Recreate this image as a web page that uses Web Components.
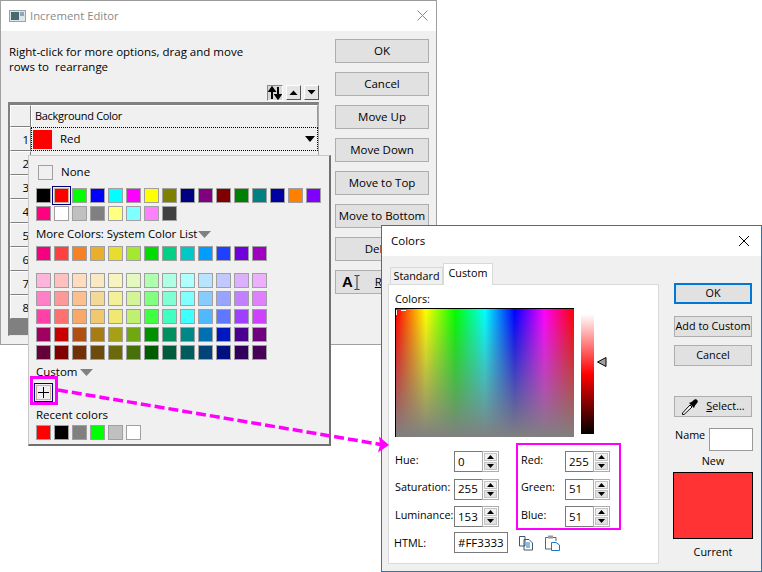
<!DOCTYPE html>
<html>
<head>
<meta charset="utf-8">
<title>Increment Editor</title>
<style>
  html, body { margin: 0; padding: 0; background: #fff; }
  body { width: 762px; height: 572px; overflow: hidden; position: relative; font: 11.5px "Open Sans", "Noto Sans", sans-serif; color: #000; }
</style>
</head>
<body>
<increment-editor></increment-editor>
<color-popup></color-popup>
<colors-dialog></colors-dialog>
<pink-arrow></pink-arrow>

<script>
const FONT = '"Open Sans", "Noto Sans", sans-serif';

class WinButton extends HTMLElement {
  constructor() {
    super();
    this.attachShadow({ mode: 'open' });
    this.shadowRoot.innerHTML = `
      <style>
        :host { display: flex; align-items: center; justify-content: center; box-sizing: border-box; padding-bottom: 2px;
          background: #e1e1e1; border: 1px solid #adadad; font-size: inherit; color: #000; white-space: nowrap; overflow: hidden; }
        :host([primary]) { border: 2px solid #0078d7; }
      </style>
      <slot></slot>`;
  }
}
customElements.define('win-button', WinButton);

class ColorSwatch extends HTMLElement {
  constructor() {
    super();
    this.attachShadow({ mode: 'open' });
    this.shadowRoot.innerHTML = `
      <style>
        :host { display: block; box-sizing: border-box; width: 15px; height: 15px; border: 1px solid #a0a0a0; background: var(--c); }
        :host([selected]) { outline: 1px solid #000080; outline-offset: 1px; border-color: #c8b090; }
      </style>`;
  }
}
customElements.define('color-swatch', ColorSwatch);

class SwatchRow extends HTMLElement {
  constructor() {
    super();
    this.attachShadow({ mode: 'open' });
    this.shadowRoot.innerHTML = `
      <style>:host { display: flex; gap: 3px; flex: none; }</style>`;
  }
  connectedCallback() {
    if (this.shadowRoot.querySelector('color-swatch')) return;
    const sel = this.getAttribute('sel');
    this.getAttribute('colors').split(' ').forEach((c, i) => {
      const s = document.createElement('color-swatch');
      s.style.setProperty('--c', c);
      if (String(i) === sel) s.setAttribute('selected', '');
      this.shadowRoot.appendChild(s);
    });
  }
}
customElements.define('swatch-row', SwatchRow);

class IncrementEditor extends HTMLElement {
  constructor() {
    super();
    this.attachShadow({ mode: 'open' });
    const rows = [2, 3, 4, 5, 6, 7, 8].map(n => `<div class="rh">${n}</div><div class="cell"></div>`).join('');
    this.shadowRoot.innerHTML = `
      <style>
        :host { position: absolute; left: 0; top: 0; width: 437px; height: 345px; box-sizing: border-box;
          display: flex; flex-direction: column; background: #f0f0f0; border: 1px solid #a0a0a0; border-top-color: #9a9a9a; font: 11.5px ${FONT}; }
        .title { height: 30px; flex: none; box-sizing: border-box; background: #fff; display: flex; align-items: center; padding: 0 8px 1px 8px; gap: 4px; color: #8a8a8a; font-size: 11.300px; }
        .title span { flex: 1; }
        .body { flex: 1; display: flex; min-height: 0; }
        .left { width: 334px; flex: none; padding: 13px 0 0 7px; box-sizing: border-box; }
        .hint { line-height: 15px; height: 30px; margin: 0 0 10px 0; padding-left: 1px; }
        .tools { display: flex; justify-content: flex-end; gap: 3px; padding: 1px 16px 0 0; height: 17px; }
        .tools div { width: 15px; height: 15px; box-sizing: border-box; background: #e4e4e4; border: 1px solid #fff; border-right-color: #555; border-bottom-color: #555; display: flex; align-items: center; justify-content: center; }
        .tools div.on { width: 16px; height: 16px; background: #d8d8d8; border: 1px solid #888; border-right-color: #fff; border-bottom-color: #fff; }
        .grid { width: 311px; height: 234px; box-sizing: border-box; border: 2px solid #808080; border-top-width: 3px; border-right: 1px solid #aaa; border-bottom: 1px solid #e8e8e8; background: #808080;
          display: grid; grid-template-columns: 21px 1fr; grid-template-rows: 22px repeat(8, 24px); align-content: start; }
        .rh { background: #f0f0f0; border: 1px solid #fff; border-right-color: #808080; border-bottom-color: #808080; box-sizing: border-box; display: flex; align-items: center; justify-content: flex-end; padding-right: 1px; }
        .cell { background: #f0f0f0; border-bottom: 1px solid #bbb; box-sizing: border-box; }
        .head { display: flex; align-items: center; padding: 0 0 2px 3px; font-size: 11px; letter-spacing: -.3px; border: 1px solid #fff; border-right-color: #999; border-bottom-color: #f0f0f0; box-sizing: border-box; background: #f0f0f0; }
        .sel { border: 1px dotted #000; box-sizing: border-box; display: flex; align-items: center; background: #f0f0f0; padding: 0 2px 0 1px; }
        .sel i { width: 19px; height: 19px; background: #ff0000; margin-right: 8px; flex: none; }
        .sel span { flex: 1; padding-bottom: 2px; }
        .right { flex: 1; display: flex; flex-direction: column; gap: 9px; padding-top: 8px; }
        .right win-button { width: 94px; height: 24px; }
        .ai { justify-content: flex-start; }
        .ai b { font-size: 15px; margin-left: 6px; font-family: "Liberation Sans", sans-serif; }
        .ai svg { margin: 2px 0 0 1px; }
        .ai u { margin-left: 15px; }
      </style>
      <div class="title">
        <svg width="17" height="12" viewBox="0 0 17 12"><rect x="0.5" y="0.5" width="16" height="11" fill="#dfe6e8" stroke="#9aa2a6"/><rect x="2" y="2" width="8" height="8" fill="#4a6a70"/><rect x="11" y="2" width="4" height="4" fill="#8fa8b8"/></svg>
        <span>Increment Editor</span>
        <svg width="11" height="11" viewBox="0 0 11 11"><path d="M0.500 0.500L10.500 10.500M10.500 0.500L0.500 10.500" stroke="#8a8a8a" fill="none"/></svg>
      </div>
      <div class="body">
        <div class="left">
          <div class="hint">Right-click for more options, drag and move<br>rows to&nbsp; rearrange</div>
          <div class="tools">
            <div class="on"><svg width="14" height="14" viewBox="0 0 14 14"><path d="M4 13V4M1.500 5L4 1.500L6.500 5ZM10 1V10M7.500 9L10 12.500L12.500 9Z" stroke="#000" stroke-width="2" fill="#000"/></svg></div>
            <div><svg width="9" height="5" viewBox="0 0 9 5"><path d="M0.500 5L4.500 0.500L8.500 5Z"/></svg></div>
            <div><svg width="9" height="5" viewBox="0 0 9 5"><path d="M0.500 0L4.500 4.500L8.500 0Z"/></svg></div>
          </div>
          <div class="grid">
            <div class="rh"></div><div class="head">Background Color</div>
            <div class="rh">1</div>
            <div class="sel"><i></i><span>Red</span><svg width="10" height="6" viewBox="0 0 10 6"><path d="M0 0H10L5 6Z"/></svg></div>
            ${rows}
          </div>
        </div>
        <div class="right">
          <win-button>OK</win-button>
          <win-button>Cancel</win-button>
          <win-button>Move Up</win-button>
          <win-button>Move Down</win-button>
          <win-button>Move to Top</win-button>
          <win-button>Move to Bottom</win-button>
          <win-button>Delete</win-button>
          <win-button class="ai"><b>A</b><svg width="6" height="15" viewBox="0 0 6 15"><path d="M0.500 0.500H2.500L3 1.500L3.500 0.500H5.500M3 1.500V13.500M0.500 14.500H2.500L3 13.500L3.500 14.500H5.500" stroke="#333" fill="none"/></svg><u>R</u></win-button>
        </div>
      </div>`;
  }
}
customElements.define('increment-editor', IncrementEditor);

class ColorPopup extends HTMLElement {
  constructor() {
    super();
    this.attachShadow({ mode: 'open' });
    const tri = '<svg class="tri" width="13" height="7" viewBox="0 0 13 7"><path d="M0 0H13L6.500 7Z" fill="#808080"/></svg>';
    this.shadowRoot.innerHTML = `
      <style>
        :host { position: absolute; left: 28px; top: 155px; width: 303px; height: 291px; box-sizing: border-box; background: #f0f0f0;
          border: 1px solid #c8c8c8; border-right: 2px solid #707070; border-bottom: 2px solid #707070; padding: 8px 0 0 7px; display: flex; flex-direction: column; font: 11.5px ${FONT}; }
        .none { display: flex; align-items: flex-end; gap: 8px; height: 16px; margin: 0 0 8px 2px; flex: none; }
        .none i { width: 15px; height: 15px; box-sizing: border-box; border: 1px solid #a0a0a0; display: block; }
        .none span { line-height: 16px; }
        .stack { display: flex; flex-direction: column; gap: 3px; flex: none; }
        .lab { height: 20px; display: flex; align-items: center; flex: none; white-space: nowrap; }
        .lab svg { margin: 3px 0 0 1px; }
        .lab.cu svg { margin-left: 3px; }
        .sys { letter-spacing: -.07px; }
        .gap { height: 12px; flex: none; }
        .plus { width: 19px; height: 19px; flex: none; box-sizing: border-box; border: 1px solid #000080; padding: 1px; margin: 2px 0 3px -2px; }
        .plus div { width: 100%; height: 100%; box-sizing: border-box; border: 1px solid #c8b090; }
        .plus svg { display: block; }
        .mag { position: absolute; left: 1px; top: 220px; width: 28px; height: 29px; box-sizing: border-box; border: 3px solid #ff00ff; }
      </style>
      <div class="none"><i></i><span>None</span></div>
      <div class="stack">
        <swatch-row sel="1" colors="#000 #f00 #0f0 #00f #0ff #f0f #ff0 #808000 #000080 #800080 #800000 #008000 #008080 #0000a0 #ff8000 #8000ff"></swatch-row>
        <swatch-row colors="#ff0080 #fff #c0c0c0 #808080 #ffff80 #80ffff #ff80ff #404040"></swatch-row>
      </div>
      <div class="lab sys" style="margin-top:2px;margin-bottom:3px">More Colors: System Color List${tri}</div>
      <swatch-row colors="#f40080 #ff4040 #f58025 #e8ae2c #e8dc2e #a4e832 #00dc00 #00d084 #00c8c8 #009cff #2040ff #7000dc #a000c0"></swatch-row>
      <div class="gap"></div>
      <div class="stack">
        <swatch-row colors="#ffb4dc #ffc0c0 #fddcc0 #f8e8c4 #f8f4c0 #e4f8c0 #b0ffb0 #b0ffe4 #b0ffff #b8e4ff #c0c8ff #dcb0ff #ecb0ff"></swatch-row>
        <swatch-row colors="#ff80c8 #ff9898 #fcc090 #f4d898 #f4f098 #d4f498 #80ff80 #80ffd4 #80ffff #88ccff #98a4ff #c080ff #e080ff"></swatch-row>
        <swatch-row colors="#ff40a8 #ff7070 #f8a868 #f0c870 #f0e870 #c0f070 #40ff40 #40ffc0 #40ffff #50b8ff #6078ff #a040ff #d040ff"></swatch-row>
        <swatch-row colors="#a00060 #c80000 #b05010 #a87c14 #a8a014 #70a814 #009000 #009060 #008888 #0070b0 #0018c0 #4c0090 #700080"></swatch-row>
        <swatch-row colors="#640038 #800000 #703008 #6c4c0c #6c680c #487008 #005c00 #005c3c #005c5c #004478 #001080 #30005c #480058"></swatch-row>
      </div>
      <div class="lab cu" style="margin-top:1px">Custom${tri}</div>
      <div class="plus"><div><svg width="13" height="13" viewBox="0 0 13 13"><path d="M6.500 1V12M1 6.500H12" stroke="#000" fill="none"/></svg></div></div>
      <div class="lab" style="height:18px">Recent colors</div>
      <swatch-row style="margin-top:2px" colors="#f00 #000 #808080 #0f0 #c0c0c0 #fff"></swatch-row>
      <div class="mag"></div>`;
  }
}
customElements.define('color-popup', ColorPopup);

class SpinField extends HTMLElement {
  constructor() {
    super();
    this.attachShadow({ mode: 'open' });
    this.shadowRoot.innerHTML = `
      <style>
        :host { display: flex; box-sizing: border-box; width: 45px; height: 21px; font-size: 11.500px; }
        .val { width: 28px; box-sizing: border-box; background: #fff; border: 1px solid #7a7a7a; border-right: none; padding: 0 0 1px 3px; display: flex; align-items: center; }
        .btns { flex: 1; display: flex; flex-direction: column; gap: 1px; border: 1px solid #adadad; box-sizing: border-box; padding: 1px; background: #fff; }
        .btns div { flex: 1; background: #e1e1e1; border: 1px solid #c4c4c4; display: flex; align-items: center; justify-content: center; }
        .btns div:first-child { background: #f0f0f0; }
      </style>
      <div class="val"><slot></slot></div>
      <div class="btns">
        <div><svg width="7" height="4" viewBox="0 0 7 4"><path d="M0 4L3.500 0L7 4Z"/></svg></div>
        <div><svg width="7" height="4" viewBox="0 0 7 4"><path d="M0 0L3.500 4L7 0Z"/></svg></div>
      </div>`;
  }
}
customElements.define('spin-field', SpinField);

class ColorsDialog extends HTMLElement {
  constructor() {
    super();
    this.attachShadow({ mode: 'open' });
    this.shadowRoot.innerHTML = `
      <style>
        :host { position: absolute; left: 381px; top: 225px; width: 381px; height: 347px; box-sizing: border-box; background: #f0f0f0;
          border: 1px solid #1979ca; display: flex; flex-direction: column; font: 10.800px ${FONT}; }
        .title { height: 30px; flex: none; box-sizing: border-box; background: #fff; display: flex; align-items: center; justify-content: space-between; padding: 0 11px 0 9px; font-size: 11.500px; }
        .title span { padding-bottom: 2px; }
        .body { flex: 1; display: flex; padding: 7px 0 0 6px; min-height: 0; }
        .left { width: 271px; flex: none; display: flex; flex-direction: column; }
        .tabs { display: flex; height: 21px; align-items: flex-end; padding-left: 2px; flex: none; }
        .tab { width: 53px; height: 17px; box-sizing: border-box; border: 1px solid #d9d9d9; border-bottom: none; padding-bottom: 2px; display: flex; align-items: center; justify-content: center; background: #f0f0f0; }
        .tab.on { width: 50px; height: 22px; background: #fff; margin-bottom: -1px; position: relative; z-index: 1; padding-bottom: 4px; }
        .panel { height: 280px; flex: none; box-sizing: border-box; background: #fff; border: 1px solid #d9d9d9; padding: 7px 6px 0 6px; }
        .cap { height: 16px; line-height: 14px; }
        .pick { display: flex; height: 129px; }
        .canvas { width: 179px; height: 129px; box-sizing: border-box; border: 1px solid #000; border-right: none; border-bottom: none; flex: none; position: relative;
          background: linear-gradient(to bottom, rgba(128,128,128,0), #808080), linear-gradient(to right, #f00, #ff0 16.66%, #0f0 33.33%, #0ff 50%, #00f 66.66%, #f0f 83.33%, #f00); }
        .canvas i { position: absolute; background: #fff; }
        .lum { width: 13px; height: 120px; margin: 6px 0 0 7px; flex: none; background: linear-gradient(to bottom, #fff, #f00 50%, #000); }
        .mark { margin: 49px 0 0 3px; flex: none; }
        .fields { display: grid; grid-template-columns: 59px 45px 22px 44px 45px; grid-auto-rows: 27.500px; align-items: center; margin-top: 11px; white-space: nowrap; }
        .fields span { padding-bottom: 5px; }
        .fields .html { display: flex; align-items: center; gap: 10px; grid-column: 2 / 6; margin-top: -3px; }
        .fields .hl { margin: -3px 0 0 -1px; padding: 0; }
        .hx { width: 54px; height: 21px; box-sizing: border-box; border: 1px solid #7a7a7a; padding: 0 0 1px 3px; display: flex; align-items: center; font-size: 11.500px; }
        .right { flex: 1; display: flex; flex-direction: column; align-items: center; padding: 20px 9px 0 15px; min-width: 0; }
        .right win-button { width: 78px; height: 21px; flex: none; }
        .nameRow { display: flex; width: 79px; justify-content: space-between; align-items: flex-start; margin-top: 11px; align-self: flex-start; flex: none; }
        .nameRow span { margin: -1px 0 0 1px; }
        .new { width: 44px; height: 23px; box-sizing: border-box; background: #fff; border: 1px solid #999; }
        .cur { width: 80px; height: 67px; flex: none; box-sizing: border-box; background: #ff3333; border: 1px solid #000; margin: 3px 0 0 -1px; align-self: flex-start; }
        .redbox { position: absolute; left: 134px; top: 217px; width: 105px; height: 87px; box-sizing: border-box; border: 2px solid #ff00ff; }
      </style>
      <div class="title"><span>Colors</span>
        <svg width="12" height="12" viewBox="0 0 12 12"><path d="M1 1L11 11M11 1L1 11" stroke="#000" fill="none"/></svg>
      </div>
      <div class="body">
        <div class="left">
          <div class="tabs"><div class="tab">Standard</div><div class="tab on">Custom</div></div>
          <div class="panel">
            <div class="cap">Colors:</div>
            <div class="pick">
              <div class="canvas"><i style="left:0;top:1px;width:1px;height:5px"></i><i style="left:5px;top:1px;width:5px;height:1px"></i></div>
              <div class="lum"></div>
              <svg class="mark" width="10" height="10" viewBox="0 0 10 10"><path d="M9 .5V9.500L.5 5Z" fill="#a0a0a0" stroke="#000"/></svg>
            </div>
            <div class="fields">
              <span>Hue:</span><spin-field>0</spin-field><i></i><span>Red:</span><spin-field>255</spin-field>
              <span>Saturation:</span><spin-field>255</spin-field><i></i><span>Green:</span><spin-field>51</spin-field>
              <span>Luminance:</span><spin-field>153</spin-field><i></i><span>Blue:</span><spin-field>51</spin-field>
              <span class="hl">HTML:</span>
              <div class="html"><div class="hx">#FF3333</div>
                <svg width="16" height="16" viewBox="0 0 16 16"><path d="M1.500 1.500H7V11H1.500ZM6 4.500H11L14.500 8V15H6Z" fill="#fff" stroke="#456"/><path d="M8 8H12M8 10H12M8 12H12" stroke="#1979ca"/></svg>
                <svg width="17" height="17" viewBox="0 0 17 17"><path d="M1.500 3.500H12V7M1.500 3.500V15H7" fill="none" stroke="#567"/><rect x="4" y="1.500" width="5" height="3" fill="#999"/><path d="M7.500 8.500H12L15.500 11V16.500H7.500Z" fill="#fff" stroke="#1979ca"/></svg>
              </div>
            </div>
          </div>
        </div>
        <div class="right">
          <win-button primary>OK</win-button>
          <win-button style="margin-top:12px">Add to Custom</win-button>
          <win-button style="margin-top:8px">Cancel</win-button>
          <win-button style="margin-top:30px">
            <svg width="18" height="18" viewBox="0 0 18 18" style="margin:2px 7px 0 0"><path d="M1.500 16.500L1.500 15L9 7L11 9L3 16.500Z" fill="#fff" stroke="#000"/><path d="M8 5L13 10L14 7.500L16.500 4.500C17.500 2.500 15.500 .5 13.500 1.500L10.500 4Z" fill="#000"/></svg>
            <span><u>S</u>elect...</span>
          </win-button>
          <div class="nameRow"><span>Name</span><div class="new"></div></div>
          <div style="margin-top:1px;line-height:17px;flex:none">New</div>
          <div class="cur"></div>
          <div style="margin-top:4px;line-height:17px;flex:none">Current</div>
        </div>
      </div>
      <div class="redbox"></div>`;
  }
}
customElements.define('colors-dialog', ColorsDialog);

class PinkArrow extends HTMLElement {
  constructor() {
    super();
    this.attachShadow({ mode: 'open' });
    this.shadowRoot.innerHTML = `
      <style>:host { position: absolute; left: 0; top: 0; width: 762px; height: 572px; pointer-events: none; display: block; }</style>
      <svg width="762" height="572" viewBox="0 0 762 572">
        <path d="M58 390L381 444.500" stroke="#ff00ff" stroke-width="3.500" stroke-dasharray="10 4" fill="none"/>
        <path d="M379 436.500L389 445L378 452.500L380 445Z" fill="#ff00ff"/>
      </svg>`;
  }
}
customElements.define('pink-arrow', PinkArrow);
</script>
</body>
</html>
